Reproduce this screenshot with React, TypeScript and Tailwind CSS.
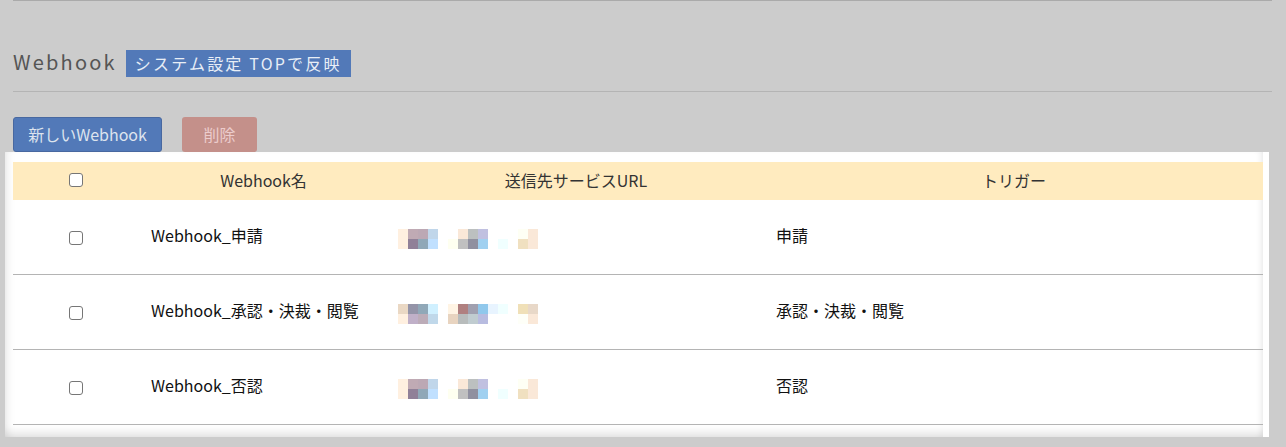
import React from "react";

const F = '"Noto Sans CJK JP", "Noto Sans", sans-serif';
const W = "#ffffff";

const row1Top = ["#fff0e0", "#c0aab4", "#bca8b4", "#c0d6ea", W, W, "#fae8d8", "#bcc0c0", "#c0c0e0", W, W, W, "#fefff4", "#fae8d8"];
const row1Bot = ["#fff0e0", "#908098", "#90a8b8", "#c0e0ff", W, "#fefff0", "#c0c0c0", "#9090a0", "#a0d0f0", W, "#f0ffff", W, "#f0e0c0", "#fae8d8"];
const row2Top = ["#ead8c4", "#9494a8", "#90a8b8", "#d0f0ff", W, "#fff4e4", "#b08080", "#a0a0b0", "#90c8ec", "#e8f4ff", "#f0ffff", W, "#f0e0b8", "#e8d8c8"];
const row2Bot = ["#fff0e0", "#c0b0c8", "#bcacb8", "#c0d8ea", W, "#e8d4c0", "#b8bcbc", "#c0ccd0", "#b8bce0", W, W, W, "#fefff8", "#fae8d8"];

function Pix({ top, bot }: { top: string[]; bot: string[] }) {
  return (
    <div className="flex flex-col">
      {[top, bot].map((r, i) => (
        <div key={i} className="flex">
          {r.map((c, j) => (
            <div key={j} className="w-[10px] h-[10px]" style={{ background: c }} />
          ))}
        </div>
      ))}
    </div>
  );
}

const rows = [
  { name: "Webhook_申請", trig: "申請", top: row1Top, bot: row1Bot },
  { name: "Webhook_承認・決裁・閲覧", trig: "承認・決裁・閲覧", top: row2Top, bot: row2Bot },
  { name: "Webhook_否認", trig: "否認", top: row1Top, bot: row1Bot },
];

function Cb() {
  return <div role="checkbox" aria-checked="false" className="w-[14px] h-[14px] bg-white border border-[#767676] rounded-[3px]" />;
}

export default function App() {
  return (
    <div className="w-[1286px] h-[447px] bg-[#cccccc] overflow-hidden" style={{ fontFamily: F }}>
      <div className="ml-[13px] mr-[14px] border-t border-[#aaaaaa]" />
      <div className="ml-[13px] mt-[48px] flex items-center h-[28px]">
        <span className="text-[20px] tracking-[2.2px] text-[#555555] leading-none pb-[3px]">Webhook</span>
        <span className="ml-[9px] h-[27px] px-[9px] bg-[#5279b8] text-[#e8eef6] text-[16px] leading-[26px] tracking-[2.2px]">
          システム設定 TOPで反映
        </span>
      </div>
      <div className="ml-[13px] mr-[14px] mt-[14px] border-t border-[#b4b4b4]" />
      <div className="ml-[13px] mt-[25px] flex gap-[20px]">
        <div className="w-[149px] h-[35px] bg-[#5279b8] rounded-[3px] border border-[#4868a0] text-[#dde4ee] text-[16px] flex items-center justify-center pb-[2px]">
          新しいWebhook
        </div>
        <div className="w-[75px] h-[35px] bg-[#c4908a] rounded-[3px] text-[#eccccc] text-[16px] flex items-center justify-center pb-[2px]">
          削除
        </div>
      </div>
      <div className="relative ml-[5px] w-[1264px] h-[285px] bg-white">
        <div className="absolute inset-0 right-[6px] shadow-[inset_0_-10px_10px_-6px_rgba(0,0,0,0.12),inset_8px_0_8px_-6px_rgba(0,0,0,0.1),inset_-6px_0_6px_-4px_rgba(0,0,0,0.08)]" />
        <div className="relative pl-[8px] pr-[6px] pt-[10px]">
          <div className="flex h-[38px] bg-[#ffebbf] items-center text-[16px] text-[#333333]">
            <div className="w-[127px] flex justify-center pr-[2px] pb-[2px]"><Cb /></div>
            <div className="w-[247px] text-center pb-[3px]">Webhook名</div>
            <div className="w-[378px] text-center pb-[3px]">送信先サービスURL</div>
            <div className="flex-1 text-center pb-[3px]">トリガー</div>
          </div>
          {rows.map((r, i) => (
            <div key={i} className="flex h-[75px] items-center border-b border-[#b4b4b4] text-[16px] text-[#111111]">
              <div className="w-[127px] flex justify-center pr-[2px] pt-[1px]"><Cb /></div>
              <div className="w-[247px] pl-[11px] pb-[4px]">{r.name}</div>
              <div className="w-[378px] pl-[11px] pt-[4px]"><Pix top={r.top} bot={r.bot} /></div>
              <div className="flex-1 pl-[11px] pb-[4px]">{r.trig}</div>
            </div>
          ))}
        </div>
      </div>
    </div>
  );
}
